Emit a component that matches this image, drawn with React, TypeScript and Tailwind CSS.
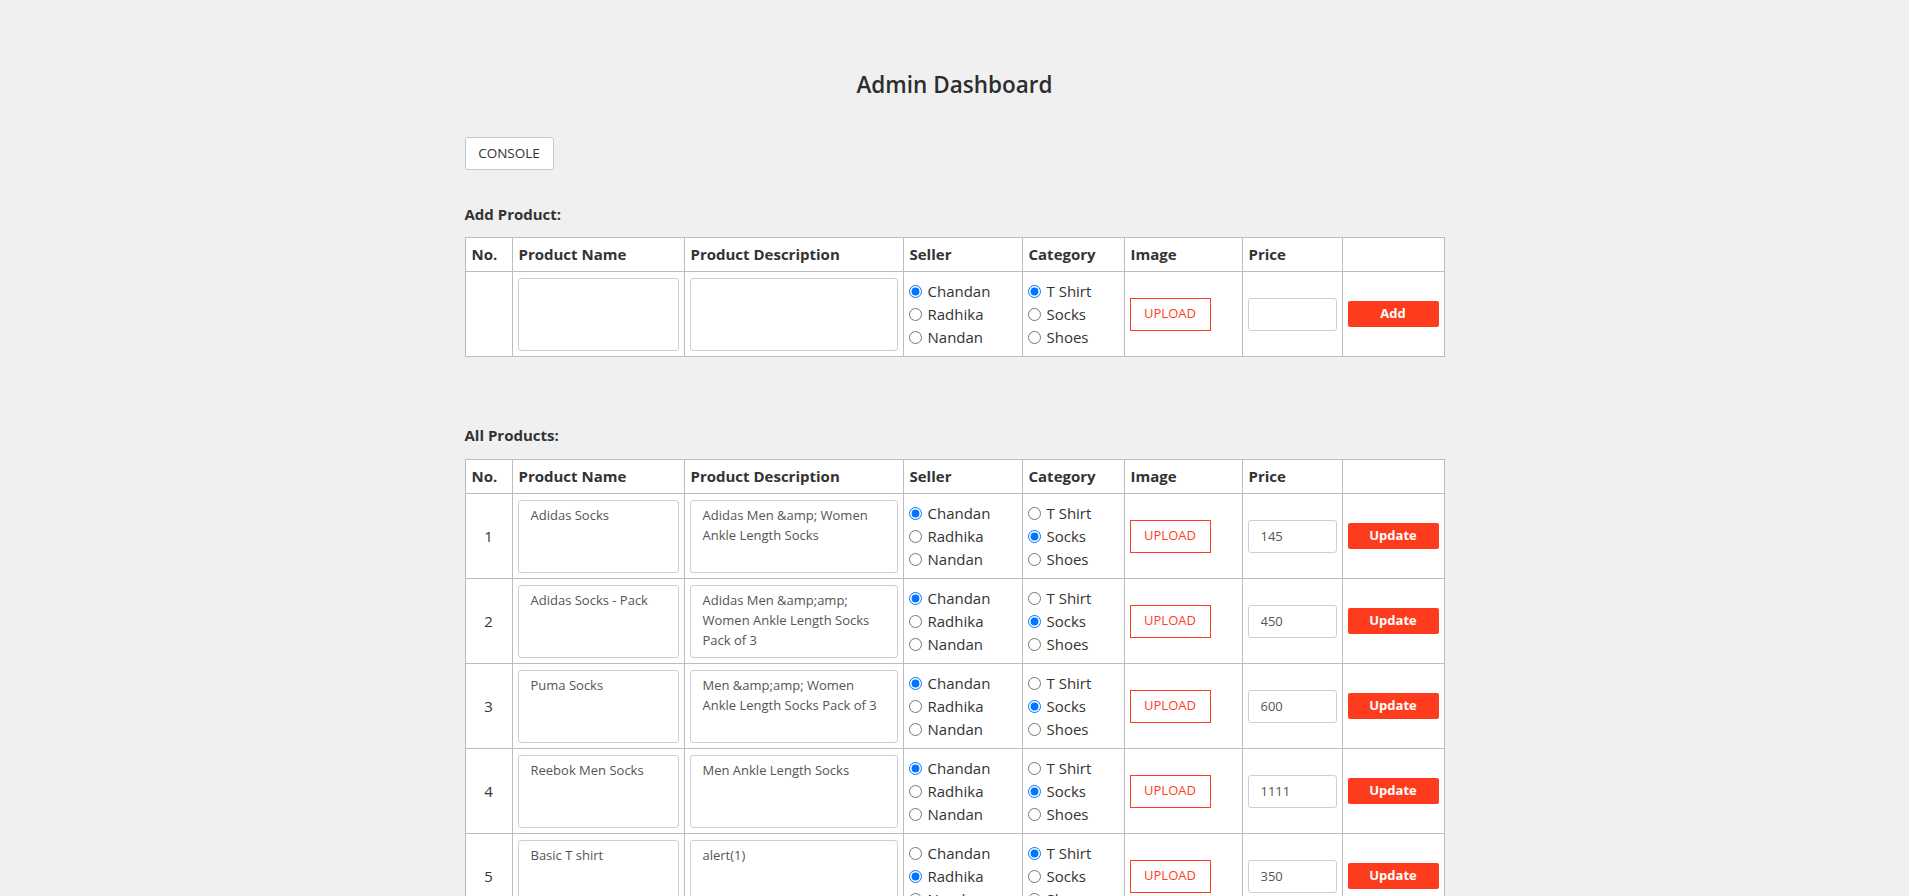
import React from "react";

const sellers = ["Chandan", "Radhika", "Nandan"];
const categories = ["T Shirt", "Socks", "Shoes"];

const products = [
  { name: "Adidas Socks", desc: "Adidas Men &amp; Women Ankle Length Socks", seller: "Chandan", category: "Socks", price: "145" },
  { name: "Adidas Socks - Pack", desc: "Adidas Men &amp;amp; Women Ankle Length Socks Pack of 3", seller: "Chandan", category: "Socks", price: "450" },
  { name: "Puma Socks", desc: "Men &amp;amp; Women Ankle Length Socks Pack of 3", seller: "Chandan", category: "Socks", price: "600" },
  { name: "Reebok Men Socks", desc: "Men Ankle Length Socks", seller: "Chandan", category: "Socks", price: "1111" },
  { name: "Basic T shirt", desc: "alert(1)", seller: "Radhika", category: "T Shirt", price: "350" },
];

const headers = ["No.", "Product Name", "Product Description", "Seller", "Category", "Image", "Price", ""];

const RadioGroup: React.FC<{ name: string; options: string[]; value: string }> = ({ name, options, value }) => (
  <div className="flex flex-col">
    {options.map((opt) => (
      <label key={opt} className="flex items-center h-[23px] text-[15px] text-[#333]">
        <input type="radio" name={name} defaultChecked={opt === value} className="m-0 mr-[6px] w-[13px] h-[13px]" />
        {opt}
      </label>
    ))}
  </div>
);

const Head = () => (
  <>
    <colgroup>
      <col className="w-[47px]" />
      <col className="w-[172px]" />
      <col className="w-[219px]" />
      <col className="w-[119px]" />
      <col className="w-[102px]" />
      <col className="w-[118px]" />
      <col className="w-[100px]" />
      <col className="w-[102px]" />
    </colgroup>
    <thead>
      <tr className="h-[34px]">
        {headers.map((h, i) => (
          <th key={i} className="border border-[#bdbdbd] px-[6px] pb-[2px] text-left text-[15px] leading-[20px] font-bold text-[#333]">
            {h}
          </th>
        ))}
      </tr>
    </thead>
  </>
);

const Row: React.FC<{ idx: string; name: string; desc: string; seller: string; category: string; price: string; action: string }> = ({ idx, name, desc, seller, category, price, action }) => {
  const cell = "border border-[#bdbdbd] px-[5px] align-middle";
  return (
    <tr className="h-[85px]">
      <td className={`${cell} text-center text-[15px] text-[#333]`}>{idx}</td>
      <td className={cell}>
        <textarea
          defaultValue={name}
          className="block w-full h-[73px] resize-none rounded-[3px] border border-[#cfcfcf] bg-white px-[12px] pt-[4px] text-[13px] leading-[20px] text-[#555] outline-none"
        />
      </td>
      <td className={cell}>
        <textarea
          defaultValue={desc}
          className="block w-full h-[73px] resize-none rounded-[3px] border border-[#cfcfcf] bg-white px-[12px] pt-[4px] text-[13px] leading-[20px] text-[#555] outline-none"
        />
      </td>
      <td className={cell}>
        <RadioGroup name={`seller-${idx || "new"}`} options={sellers} value={seller} />
      </td>
      <td className={cell}>
        <RadioGroup name={`category-${idx || "new"}`} options={categories} value={category} />
      </td>
      <td className={cell}>
        <button className="w-[81px] h-[33px] border border-[#ff3d1f] bg-white text-[13px] text-[#ff3d1f]">UPLOAD</button>
      </td>
      <td className={cell}>
        <input
          defaultValue={price}
          className="block w-[89px] h-[33px] rounded-[3px] border border-[#cfcfcf] bg-white px-[12px] text-[13px] text-[#555] outline-none"
        />
      </td>
      <td className={cell}>
        <button className="block w-full h-[26px] rounded-[2px] bg-[#ff3b1d] text-[13px] font-bold text-white">{action}</button>
      </td>
    </tr>
  );
};

export default function App() {
  return (
    <div className="min-h-screen bg-[#f0f0f0] font-['Open_Sans',sans-serif] text-[#333]">
      <div className="mx-auto w-[980px] pt-[70px] pb-10">
        <h1 className="text-center text-[22.5px] leading-[30px] font-semibold text-[#2d2d2d]">Admin Dashboard</h1>

        <button className="mt-[37px] h-[33px] w-[89px] rounded-[3px] border border-[#c8c8c8] bg-white text-[13.5px] text-[#333]">
          CONSOLE
        </button>

        <h2 className="mt-[34px] text-[15px] font-bold leading-[20px] text-[#333]">Add Product:</h2>
        <table className="mt-[13px] w-[980px] table-fixed border-collapse bg-white">
          <Head />
          <tbody>
            <Row idx="" name="" desc="" seller="Chandan" category="T Shirt" price="" action="Add" />
          </tbody>
        </table>

        <h2 className="mt-[68px] text-[15px] font-bold leading-[20px] text-[#333]">All Products:</h2>
        <table className="mt-[14px] w-[980px] table-fixed border-collapse bg-white">
          <Head />
          <tbody>
            {products.map((p, i) => (
              <Row key={i} idx={String(i + 1)} {...p} action="Update" />
            ))}
          </tbody>
        </table>
      </div>
    </div>
  );
}
